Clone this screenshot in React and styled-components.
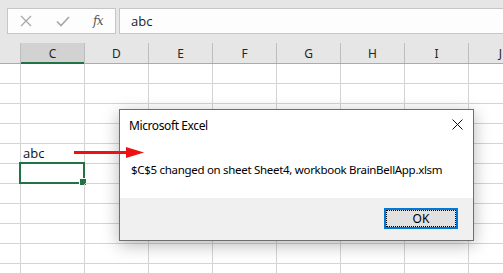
import React from 'react';
import styled, { createGlobalStyle } from 'styled-components';

const GlobalStyle = createGlobalStyle`
  html, body {
    margin: 0;
    padding: 0;
    background: #ffffff;
  }
  body {
    font-family: "Noto Sans", "Liberation Sans", sans-serif;
  }
`;

const columns = ['', 'C', 'D', 'E', 'F', 'G', 'H', 'I', 'J'];
const ROWS = 11;

const Sheet = styled.div`
    position: relative;
    width: 503px;
    height: 273px;
    overflow: hidden;
    background: #ffffff;
`;

const FormulaBar = styled.div`
    display: flex;
    gap: 3px;
    height: 43px;
    box-sizing: border-box;
    padding: 8px 0 0 7px;
    background: #e6e6e6;
`;

const ButtonsBox = styled.div`
    display: flex;
    align-items: center;
    width: 109px;
    height: 26px;
    box-sizing: border-box;
    border: 1px solid #c6c6c6;
    background: #fdfdfd;
    padding-left: 11px;
`;

const BarIcon = styled.span`
    display: flex;
    align-items: center;
    justify-content: center;
    width: ${p => p.w}px;
    margin-right: ${p => p.gap || 0}px;
    color: ${p => p.color || '#a6a6a6'};
`;

const Fx = styled.span`
    font-family: "DejaVu Serif", "Liberation Serif", serif;
    font-style: italic;
    font-size: 12px;
    color: #555555;
    letter-spacing: -0.5px;
`;

const InputBox = styled.div`
    flex: 1;
    height: 26px;
    box-sizing: border-box;
    border: 1px solid #c6c6c6;
    border-right: none;
    background: #fdfdfd;
    padding-left: 11px;
    display: flex;
    align-items: center;
    font-family: "Open Sans", sans-serif;
    font-size: 13px;
    color: #222222;
`;

const HeaderRow = styled.div`
    display: flex;
    height: 21px;
    box-sizing: border-box;
    border-bottom: 1px solid #ababab;
    background: #e6e6e6;
`;

const HeaderCell = styled.div`
    flex: none;
    width: ${p => p.w}px;
    box-sizing: border-box;
    border-right: 1px solid #bdbdbd;
    display: flex;
    align-items: center;
    justify-content: center;
    font-size: 12px;
    color: #262626;
    background: ${p => p.active ? '#d2d2d2' : 'transparent'};
    box-shadow: ${p => p.active ? 'inset 0 -2px 0 #217346' : 'none'};
    margin-bottom: ${p => p.active ? '-1px' : '0'};
`;

const Row = styled.div`
    display: flex;
    height: 20px;
`;

const Cell = styled.div`
    position: relative;
    flex: none;
    width: ${p => p.w}px;
    box-sizing: border-box;
    border-right: 1px solid #d4d4d4;
    border-bottom: 1px solid #d4d4d4;
    display: flex;
    align-items: flex-end;
    padding: 0 0 1px 2px;
    font-family: "Open Sans", sans-serif;
    font-size: 13px;
    line-height: 17px;
    color: #111111;
    white-space: nowrap;
`;

const Selection = styled.div`
    position: absolute;
    top: -2px;
    left: -2px;
    right: -1px;
    bottom: -1px;
    border: 2px solid #217346;
`;

const FillHandle = styled.div`
    position: absolute;
    right: -3px;
    bottom: -3px;
    width: 6px;
    height: 6px;
    background: #217346;
    outline: 1px solid #ffffff;
`;

const Arrow = styled.svg`
    position: absolute;
    left: 72px;
    top: 144px;
`;

const Dialog = styled.div`
    position: absolute;
    left: 119px;
    top: 109px;
    width: 355px;
    height: 132px;
    box-sizing: border-box;
    border: 1px solid #6f6f6f;
    background: #ffffff;
    box-shadow: 0 4px 16px rgba(0, 0, 0, 0.28);
    display: flex;
    flex-direction: column;
    font-size: 11.5px;
    letter-spacing: -0.3px;
    color: #000000;
    white-space: nowrap;
`;

const TitleBar = styled.div`
    display: flex;
    align-items: center;
    justify-content: space-between;
    height: 30px;
    padding: 0 9px 0 9px;
    font-size: 12px;
    letter-spacing: -0.4px;
`;

const CloseButton = styled.span`
    display: flex;
    margin-right: 1px;
    margin-top: -2px;
`;

const Message = styled.div`
    height: 58px;
    display: flex;
    align-items: center;
    padding-left: 11px;
`;

const Footer = styled.div`
    flex: 1;
    display: flex;
    justify-content: flex-end;
    align-items: flex-start;
    padding: 10px 15px 0 0;
    background: #f0f0f0;
`;

const OkButton = styled.button`
    position: relative;
    width: 74px;
    height: 21px;
    box-sizing: border-box;
    border: 2px solid #0078d7;
    background: #e1e1e1;
    font-family: "Noto Sans", "Liberation Sans", sans-serif;
    font-size: 12px;
    color: #000000;
    padding: 0;
    &::after {
        content: '';
        position: absolute;
        inset: 0;
        border: 1px dotted #000000;
    }
`;

export default function App() {
    return (
        <Sheet>
            <GlobalStyle />
            <FormulaBar>
                <ButtonsBox>
                    <BarIcon w={14} gap={22}>
                        <svg width="12" height="12" viewBox="0 0 12 12">
                            <path d="M1 1 L11 11 M11 1 L1 11" stroke="currentColor" strokeWidth="1.2" fill="none" />
                        </svg>
                    </BarIcon>
                    <BarIcon w={16} gap={21}>
                        <svg width="14" height="11" viewBox="0 0 14 11">
                            <path d="M1 5.5 L5 9.5 L13 1" stroke="currentColor" strokeWidth="1.6" fill="none" />
                        </svg>
                    </BarIcon>
                    <BarIcon w={12} color="#555555">
                        <Fx>fx</Fx>
                    </BarIcon>
                </ButtonsBox>
                <InputBox>abc</InputBox>
            </FormulaBar>

            <HeaderRow>
                {columns.map((c, i) => (
                    <HeaderCell key={i} w={i === 0 ? 21 : 64} active={c === 'C'}>{c}</HeaderCell>
                ))}
            </HeaderRow>

            {Array.from({ length: ROWS }).map((_, r) => (
                <Row key={r}>
                    {columns.map((c, i) => (
                        <Cell key={i} w={i === 0 ? 21 : 64}>
                            {r === 4 && c === 'C' && 'abc'}
                            {r === 5 && c === 'C' && (
                                <Selection>
                                    <FillHandle />
                                </Selection>
                            )}
                        </Cell>
                    ))}
                </Row>
            ))}

            <Dialog>
                <TitleBar>
                    <span>Microsoft Excel</span>
                    <CloseButton>
                        <svg width="11" height="11" viewBox="0 0 11 11">
                            <path d="M0.5 0.5 L10.5 10.5 M10.5 0.5 L0.5 10.5" stroke="#111111" strokeWidth="1" fill="none" />
                        </svg>
                    </CloseButton>
                </TitleBar>
                <Message>$C$5 changed on sheet Sheet4, workbook BrainBellApp.xlsm</Message>
                <Footer>
                    <OkButton>OK</OkButton>
                </Footer>
            </Dialog>

            <Arrow width="76" height="16" viewBox="0 0 76 16">
                <rect x="2" y="7" width="54" height="3" fill="#ee1111" />
                <polygon points="54,3 72,8.5 54,14" fill="#ee1111" />
            </Arrow>
        </Sheet>
    );
}
